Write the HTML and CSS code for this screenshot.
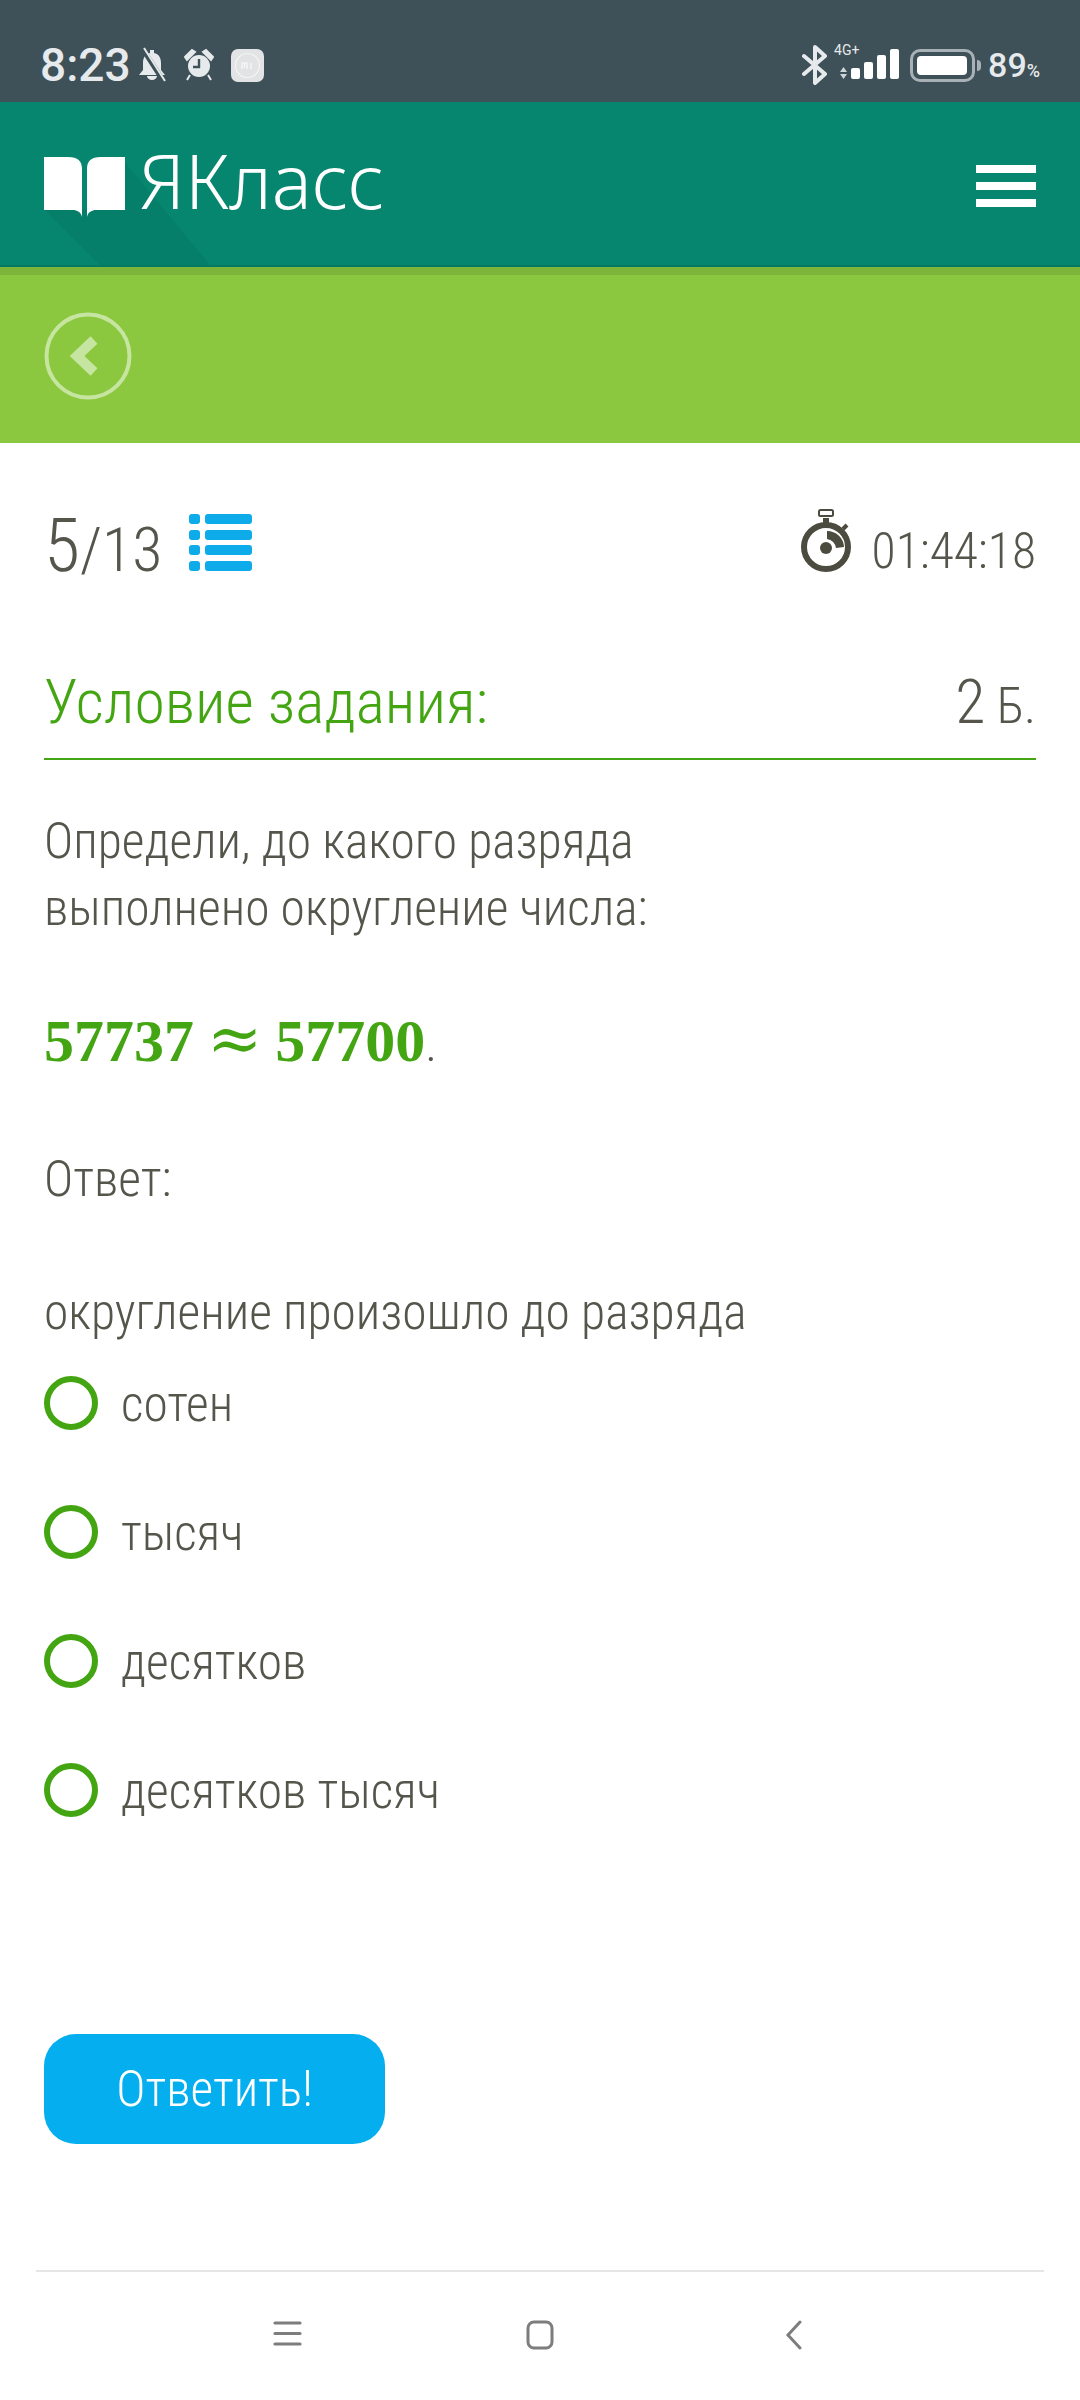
FILE: index.html
```html
<!DOCTYPE html>
<html>
<head>
    <title>ЯКласс</title>
    <link rel="stylesheet" href="styles.css">
</head>
<body>
    <!-- Status bar -->
    <div class="status-bar">
        <div class="status-left">
            <span class="clock">8:23</span>
            <svg class="ic-bell" width="30" height="36" viewBox="0 0 30 36">
                <path d="M13 3h4v3c5 1 7 5 7 10v7l4 5H2l4-5v-7c0-5 2-9 7-10z" fill="#e6eaec"/>
                <path d="M10 29h10a5 4 0 0 1-10 0z" fill="#e6eaec"/>
                <path d="M5 1l22 34" stroke="#3e5058" stroke-width="5"/>
                <path d="M7 1l21 33" stroke="#e6eaec" stroke-width="2"/>
            </svg>
            <svg class="ic-alarm" width="30" height="34" viewBox="0 0 30 34">
                <circle cx="15" cy="18" r="11" fill="#e6eaec"/>
                <path d="M15 11v8h-6" fill="none" stroke="#3e5058" stroke-width="2.4"/>
                <path d="M1 9l7-7 3 2-8 8zM29 9l-7-7-3 2 8 8zM6 27l-3 5M24 27l3 5" fill="#e6eaec" stroke="#e6eaec" stroke-width="2"/>
            </svg>
            <svg class="ic-mi" width="33" height="33" viewBox="0 0 33 33">
                <rect width="33" height="33" rx="7" fill="#e2e3e4"/>
                <circle cx="16.5" cy="16.5" r="12" fill="none" stroke="#f4f4f4" stroke-width="1.2"/>
                <path d="M11 20v-6h5v6M13.5 14v5M20 14v6" fill="none" stroke="#f4f4f4" stroke-width="1.6"/>
            </svg>
        </div>
        <div class="status-right">
            <svg class="ic-bt" width="26" height="40" viewBox="0 0 26 40">
                <path d="M2 11l21 18-10 9V2l10 9L2 29" fill="none" stroke="#e6eaec" stroke-width="4" stroke-linejoin="round" stroke-linecap="round"/>
            </svg>
            <div class="signal">
                <span class="net">4G+</span>
                <svg class="updown" width="9" height="12" viewBox="0 0 9 12">
                    <path d="M4.5 0L8 5H1zM4.5 12L1 7h7z" fill="#cfd5d8"/>
                </svg>
                <div class="bars">
                    <i class="b1"></i><i class="b2"></i><i class="b3"></i><i class="b4"></i>
                </div>
            </div>
            <div class="battery"><div class="battery-fill"></div></div>
            <div class="battery-tip"></div>
            <span class="percent">89<small>%</small></span>
        </div>
    </div>

    <!-- Header -->
    <div class="header">
        <svg class="logo-shadow" width="400" height="163" viewBox="0 0 400 163">
            <path d="M44 107L100 163H210L122 57V107z" fill="#057f6a"/>
        </svg>
        <div class="logo">
            <svg class="logo-book" width="81" height="60" viewBox="0 0 81 60">
                <path d="M0 0h24c10 0 14 4 14 12v48c-1-5-5-7-9-7H0z" fill="#fff"/>
                <path d="M81 0H57c-10 0-14 4-14 12v48c1-5 5-7 9-7h29z" fill="#fff"/>
            </svg>
            <span class="logo-text">ЯКласс</span>
        </div>
        <div class="burger"><i></i><i></i><i></i></div>
    </div>

    <!-- Sub header -->
    <div class="subheader">
        <svg width="88" height="88" viewBox="0 0 88 88">
            <circle cx="44" cy="44" r="41.5" fill="none" stroke="#c6e5a0" stroke-width="4"/>
            <path d="M50 28L33 44l17 16" fill="none" stroke="#c6e5a0" stroke-width="10"/>
        </svg>
    </div>

    <!-- Task -->
    <div class="content">
        <div class="progress-row">
            <div class="counter">
                <span class="cond counter-text"><b>5</b>/13</span>
                <svg width="63" height="58" viewBox="0 0 63 58">
                    <g fill="#0dabe9">
                        <rect x="0" y="0" width="11" height="10" rx="3"/>
                        <rect x="16" y="0" width="47" height="10" rx="3"/>
                        <rect x="0" y="16" width="11" height="10" rx="3"/>
                        <rect x="16" y="16" width="47" height="10" rx="3"/>
                        <rect x="0" y="31" width="11" height="10" rx="3"/>
                        <rect x="16" y="31" width="47" height="10" rx="3"/>
                        <rect x="0" y="47" width="11" height="10" rx="3"/>
                        <rect x="16" y="47" width="47" height="10" rx="3"/>
                    </g>
                </svg>
            </div>
            <div class="timer">
                <svg width="52" height="64" viewBox="0 0 52 64">
                    <circle cx="26" cy="38" r="22" fill="none" stroke="#4b4b3f" stroke-width="6"/>
                    <circle cx="26" cy="39" r="6" fill="#4b4b3f"/>
                    <path d="M27 22a17 17 0 0 1 17 16l-8 1a10 10 0 0 0-9-9z" fill="#4b4b3f"/>
                    <rect x="23" y="9" width="6" height="7" fill="#4b4b3f"/>
                    <rect x="19" y="1" width="14" height="6" rx="1.5" fill="none" stroke="#4b4b3f" stroke-width="2"/>
                    <path d="M43 20l4-4" stroke="#4b4b3f" stroke-width="4"/>
                </svg>
                <span class="cond timer-text">01:44:18</span>
            </div>
        </div>

        <div class="task-head">
            <span class="cond task-title">Условие задания:</span>
            <span class="cond task-points"><b>2</b> Б.</span>
        </div>

        <p class="cond text first">Определи, до какого разряда<br>выполнено округление числа:</p>
        <p class="math-line"><span class="math">57737 <span class="approx">≈</span> 57700</span><span class="cond dot">.</span></p>
        <p class="cond text answer">Ответ:</p>
        <p class="cond text question">округление произошло до разряда</p>

        <ul class="options">
            <li><span class="radio"></span><span class="cond">сотен</span></li>
            <li><span class="radio"></span><span class="cond">тысяч</span></li>
            <li><span class="radio"></span><span class="cond">десятков</span></li>
            <li><span class="radio"></span><span class="cond">десятков тысяч</span></li>
        </ul>

        <button class="submit"><span class="cond">Ответить!</span></button>
    </div>

    <!-- Navigation bar -->
    <div class="nav-bar">
        <svg width="30" height="28" viewBox="0 0 30 28">
            <path d="M2 3h25M2 13.500h25M2 24h25" stroke="#7d7d7d" stroke-width="3.200" stroke-linecap="round"/>
        </svg>
        <svg width="28" height="30" viewBox="0 0 28 30">
            <rect x="2" y="2" width="24" height="26" rx="6" fill="none" stroke="#7d7d7d" stroke-width="3"/>
        </svg>
        <svg width="18" height="30" viewBox="0 0 18 30">
            <path d="M15 2L3 15l12 13" fill="none" stroke="#7d7d7d" stroke-width="3" stroke-linecap="round"/>
        </svg>
    </div>
</body>
</html>
```

FILE: styles.css
```css
* {
    margin: 0;
    padding: 0;
    box-sizing: border-box;
}

body {
    width: 1080px;
    height: 2400px;
    overflow: hidden;
    background-color: #fff;
    color: #55554c;
    font-family: Roboto, "Liberation Sans", sans-serif;
    font-weight: 300;
}

/* Condensed light text, Roboto Condensed is not installed */
.cond {
    display: inline-block;
    font-family: Roboto, "Liberation Sans", sans-serif;
    font-weight: 300;
    font-stretch: 75%;
    white-space: nowrap;
}

.cond b {
    font-weight: 300;
}

/* Status bar */
.status-bar {
    height: 102px;
    padding: 42px 40px 0 40px;
    background-color: #3e5058;
    display: flex;
    justify-content: space-between;
    color: #e6eaec;
}

.status-left,
.status-right {
    display: flex;
    align-items: center;
    height: 46px;
}

.clock {
    font-size: 46px;
    font-weight: 500;
    margin-right: 6px;
}

.ic-alarm {
    margin-left: 17px;
}

.ic-mi {
    margin-left: 17px;
}

.signal {
    position: relative;
    width: 65px;
    height: 46px;
    margin-left: 6px;
}

.net {
    position: absolute;
    left: 0;
    top: 0;
    font-size: 14px;
    font-weight: 400;
}

.updown {
    position: absolute;
    left: 5px;
    top: 25px;
}

.bars {
    position: absolute;
    left: 17px;
    top: 7px;
    height: 30px;
    display: flex;
    align-items: flex-end;
    gap: 4px;
}

.bars i {
    display: block;
    width: 9px;
    background-color: #fff;
    border-radius: 2px;
}

.b1 { height: 11px; }
.b2 { height: 17px; }
.b3 { height: 24px; }
.b4 { height: 30px; }

.battery {
    width: 65px;
    height: 33px;
    margin-left: 11px;
    padding: 4px;
    border: 3px solid #a8b1b5;
    border-radius: 10px;
}

.battery-fill {
    height: 100%;
    width: 50px;
    background-color: #fff;
    border-radius: 4px;
}

.battery-tip {
    width: 4px;
    height: 11px;
    margin-left: 2px;
    background-color: #a8b1b5;
    border-radius: 0 4px 4px 0;
}

.percent {
    margin-left: 7px;
    font-size: 34px;
    font-weight: 500;
}

.percent small {
    font-size: 18px;
}

/* Header */
.header {
    position: relative;
    height: 165px;
    padding: 55px 44px 0;
    background-color: #06866f;
    display: flex;
    justify-content: space-between;
    overflow: hidden;
    border-bottom: 2px solid #067a60;
}

.logo-shadow {
    position: absolute;
    left: 0;
    top: 0;
}

.logo {
    position: relative;
    display: flex;
    align-items: flex-start;
}

.logo-book {
    display: block;
}

.logo-text {
    margin-left: 14px;
    margin-top: -28px;
    font-family: "Noto Sans", sans-serif;
    font-weight: 300;
    font-size: 75px;
    color: #fff;
}

.burger {
    padding-top: 8px;
    display: flex;
    flex-direction: column;
    gap: 9px;
}

.burger i {
    display: block;
    width: 60px;
    height: 8px;
    background-color: #fff;
}

/* Sub header */
.subheader {
    height: 176px;
    padding: 37px 44px 0;
    background-color: #8cc83f;
    border-top: 8px solid #7cb53a;
}

.subheader svg {
    display: block;
}

/* Task */
.content {
    height: 1827px;
    padding: 63px 44px 0;
}

.progress-row {
    height: 96px;
    display: flex;
    justify-content: space-between;
    align-items: flex-start;
}

.counter {
    display: flex;
    align-items: flex-start;
}

.counter svg {
    margin-left: 27px;
    margin-top: 8px;
}

.counter-text {
    margin-top: 5px;
    font-size: 62px;
    line-height: 70px;
}

.counter-text b {
    font-size: 74px;
}

.timer {
    display: flex;
    align-items: flex-start;
}

.timer svg {
    margin-top: 3px;
}

.timer-text {
    margin-left: 20px;
    margin-top: 15px;
    font-size: 49.5px;
    line-height: 60px;
}

.task-head {
    height: 93px;
    margin-top: 65px;
    display: flex;
    justify-content: space-between;
    align-items: flex-start;
    border-bottom: 2px solid #44a512;
}

.task-title {
    font-size: 61.8px;
    line-height: 70px;
    color: #44a512;
}

.task-points {
    font-size: 50px;
    line-height: 70px;
}

.task-points b {
    font-size: 62px;
}

.text {
    display: block;
    font-size: 49.5px;
    line-height: 67px;
}

.first {
    margin-top: 48px;
}

.math-line {
    margin-top: 56.5px;
    line-height: 80px;
}

.math {
    font-family: "Liberation Serif", serif;
    font-weight: 700;
    font-size: 60px;
    color: #44a512;
}

.approx {
    margin: 0 -2px;
    font-family: "DejaVu Serif", serif;
    font-weight: 400;
    font-size: 66px;
}

.dot {
    font-size: 49.5px;
}

.answer {
    margin-top: 50px;
}

.question {
    margin-top: 66.5px;
}

/* Answer options */
.options {
    list-style: none;
    margin-top: 30px;
}

.options li {
    height: 129px;
    display: flex;
    align-items: flex-start;
    font-size: 49.5px;
    line-height: 56px;
}

.radio {
    width: 54px;
    height: 54px;
    margin-right: 23px;
    border: 6px solid #44a512;
    border-radius: 50%;
}

/* Submit button */
.submit {
    display: block;
    width: 341px;
    height: 110px;
    margin-top: 142px;
    border: none;
    border-radius: 32px;
    background-color: #04aeef;
    color: #fff;
    font-size: 49.5px;
    text-align: center;
}

/* Navigation bar */
.nav-bar {
    position: relative;
    height: 130px;
    margin: 0 36px;
    border-top: 2px solid #e6e6e6;
}

.nav-bar svg {
    position: absolute;
    top: 48px;
}

.nav-bar svg:nth-child(1) { left: 237px; }
.nav-bar svg:nth-child(2) { left: 490px; }
.nav-bar svg:nth-child(3) { left: 749px; }
```
